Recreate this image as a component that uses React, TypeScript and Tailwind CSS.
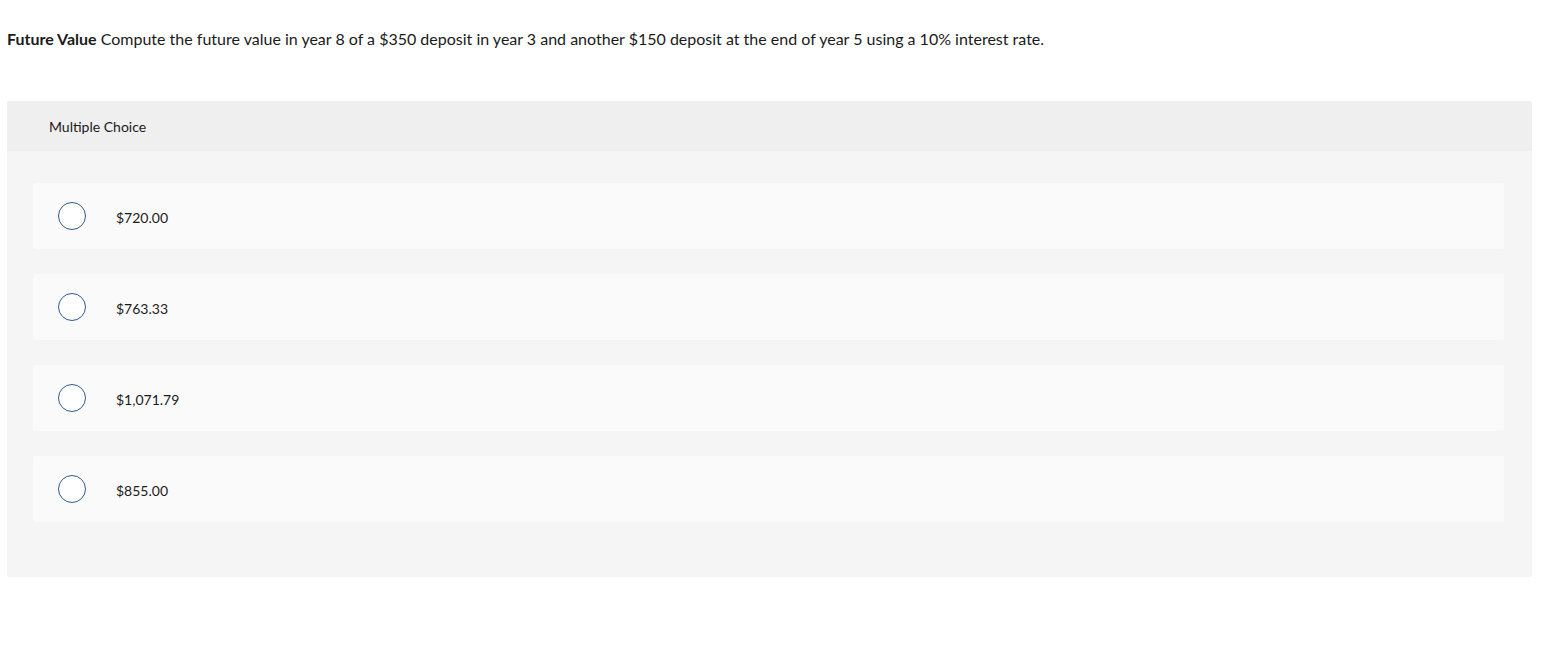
export default function App() {
  const options = ["$720.00", "$763.33", "$1,071.79", "$855.00"];
  return (
    <div className="w-[1561px] h-[647px] bg-white text-[#1a1a1a]" style={{ fontFamily: "Lato, 'Open Sans', sans-serif" }}>
      <div className="pt-[29px] pl-[7px] text-[16px] leading-[19px]">
        <span className="font-bold">Future Value</span> Compute the future value in year 8 of a $350 deposit in year 3 and another $150 deposit at the end of year 5 using a 10% interest rate.
      </div>
      <div className="mt-[53px] ml-[7px] w-[1525px] rounded-[3px] bg-[#f5f5f5] overflow-hidden">
        <div className="h-[50px] bg-[#efefef] flex items-center pl-[42px] text-[14px]">Multiple Choice</div>
        <div className="pt-[32px] pb-[55px] pl-[26px] pr-[28px] flex flex-col gap-[25px]">
          {options.map((o) => (
            <div key={o} className="h-[66px] rounded-[3px] bg-[#fafafa] flex items-center pl-[25px]">
              <div className="w-[28px] h-[28px] rounded-full border-[1.5px] border-[#2d5b8e] bg-white" />
              <span className="ml-[30px] pt-[3px] text-[14px]">{o}</span>
            </div>
          ))}
        </div>
      </div>
    </div>
  );
}
